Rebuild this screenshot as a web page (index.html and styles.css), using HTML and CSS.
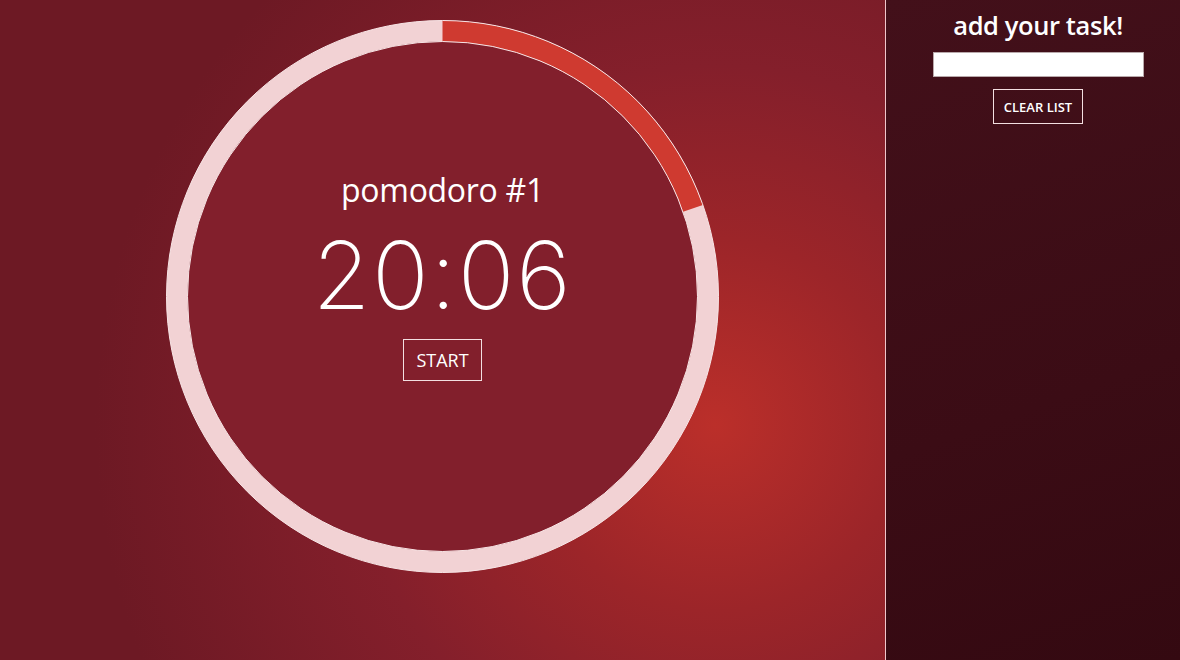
FILE: index.html
```html
<!DOCTYPE html>
<html>
<head>
<meta charset="utf-8">
<link rel="stylesheet" href="styles.css">
</head>
<body>
<main class="stage">
  <div class="dial">
    <svg class="ring" width="553" height="553" viewBox="0 0 553 553">
      <circle cx="276.5" cy="276.5" r="255" fill="#821f2c"/>
      <circle cx="276.5" cy="276.5" r="265.5" fill="none" stroke="#f2d2d4" stroke-width="21"/>
      <circle cx="276.5" cy="276.5" r="265.5" fill="none" stroke="#cf3a30" stroke-width="21"
        stroke-dasharray="327 2000" transform="rotate(-90 276.5 276.5)"/>
      <circle cx="276.5" cy="276.5" r="276" fill="none" stroke="#f7e4e5" stroke-width="1"/>
      <circle cx="276.5" cy="276.5" r="255" fill="none" stroke="#f7e4e5" stroke-width="1"/>
    </svg>
    <div class="dial-content">
      <h1 class="title">pomodoro #1</h1>
      <div class="time">20:06</div>
      <button class="btn btn-start">START</button>
    </div>
  </div>
</main>
<aside class="sidebar">
  <h2 class="side-title">add your task!</h2>
  <input class="task-input" type="text">
  <button class="btn btn-clear">CLEAR LIST</button>
</aside>
</body>
</html>
```
FILE: styles.css
```css
html, body {
  margin: 0;
  height: 100%;
}
body {
  display: flex;
  width: 1180px;
  height: 660px;
  overflow: hidden;
  font-family: "Open Sans", "Noto Sans", sans-serif;
  color: #fff;
}
.stage {
  width: 886px;
  flex: none;
  border-right: 1px solid #f0c6cb;
  background: radial-gradient(circle 620px at 715px 425px, #bb2f2a 0%, #9c2529 30%, #841f2b 58%, #6d1924 100%);
  display: flex;
  justify-content: center;
  padding-top: 20px;
  box-sizing: border-box;
}
.dial {
  position: relative;
  width: 553px;
  height: 553px;
}
.ring {
  position: absolute;
  left: 0;
  top: 0;
}
.dial-content {
  position: relative;
  display: flex;
  flex-direction: column;
  align-items: center;
  padding-top: 150px;
}
.title {
  margin: 0;
  font-weight: 400;
  font-size: 32px;
  line-height: 40px;
  letter-spacing: -0.3px;
}
.time {
  font-family: "Inter", sans-serif;
  font-weight: 200;
  font-size: 94px;
  line-height: 110px;
  margin-top: 10px;
  letter-spacing: 1.5px;
}
.btn {
  background: transparent;
  color: #fff;
  border: 1px solid #f3dfe1;
  font-family: "Open Sans", sans-serif;
  padding: 0;
  cursor: pointer;
}
.btn-start {
  width: 79px;
  height: 42px;
  font-size: 18px;
  margin-top: 9px;
}
.sidebar {
  flex: 1;
  background: linear-gradient(160deg, #43101a 0%, #3b0c15 60%, #340911 100%);
  display: flex;
  flex-direction: column;
  align-items: center;
  padding-left: 10px;
}
.side-title {
  margin: 6px 0 0;
  font-size: 25.5px;
  line-height: 38px;
  font-weight: 600;
  letter-spacing: -0.4px;
}
.task-input {
  margin-top: 8px;
  width: 211px;
  height: 25px;
  box-sizing: border-box;
  border: 1px solid #b9a9ab;
  background: #fff;
  padding: 0;
}
.btn-clear {
  margin-top: 12px;
  width: 90px;
  height: 35px;
  font-size: 13px;
  font-weight: 600;
}
```
